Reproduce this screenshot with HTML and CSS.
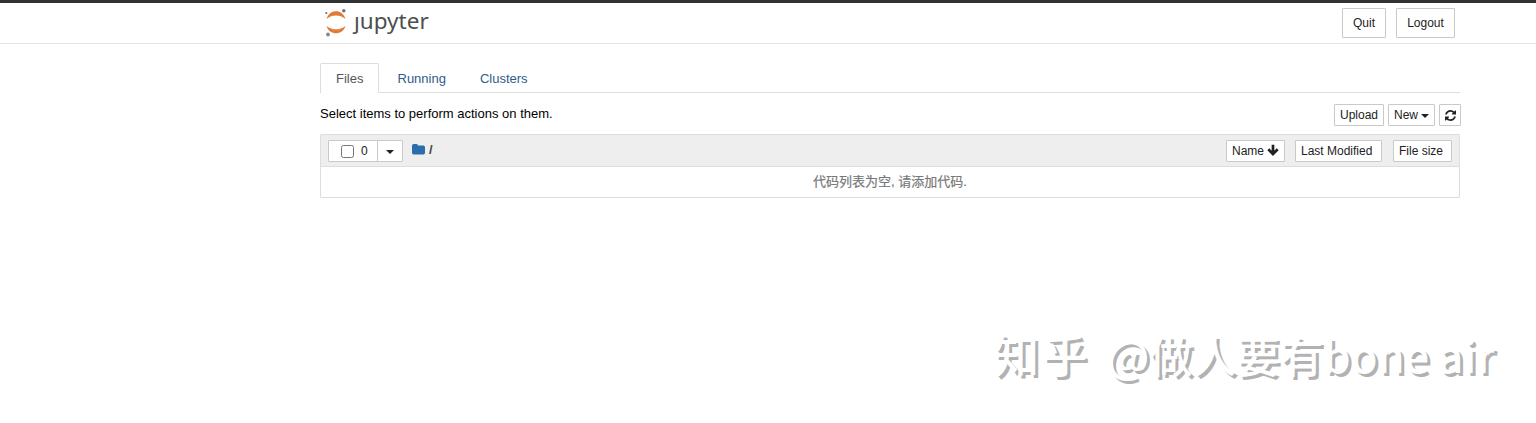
FILE: index.html
```html
<!DOCTYPE html>
<html lang="en">
<head>
<meta charset="utf-8">
<title>Home</title>
<link rel="stylesheet" href="styles.css">
</head>
<body>
<header class="header">
  <div class="container header-row">
    <div class="logo">
      <svg class="logo-mark" width="24" height="30" viewBox="0 0 24 30">
        <path fill="#e37b38" d="M2.5 12.1C4 6.7 7.8 4.2 12 4.2s8 2.500 9.500 7.900C18.500 9.300 15.500 8.400 12 8.400S5.500 9.300 2.500 12.100Z"/>
        <path fill="#e37b38" d="M2.500 18.900C4 23.700 7.800 26.200 12 26.200s8-2.500 9.500-7.300C18.500 21.400 15.500 22.200 12 22.200S5.500 21.400 2.500 18.900Z"/>
        <circle cx="19.800" cy="3.800" r="1.700" fill="#6f7070"/>
        <circle cx="2.300" cy="6" r="1.100" fill="#6f7070"/>
        <circle cx="4" cy="27.500" r="2" fill="#8b8b8b"/>
      </svg>
      <span class="wordmark"><span class="wordmark-j">j</span>upyter</span>
    </div>
    <div class="header-actions">
      <button class="btn btn-quit">Quit</button>
      <button class="btn btn-logout">Logout</button>
    </div>
  </div>
</header>
<main class="container">
  <nav class="tabs">
    <a class="tab active">Files</a>
    <a class="tab running">Running</a>
    <a class="tab">Clusters</a>
  </nav>
  <div class="toolbar">
    <span class="hint">Select items to perform actions on them.</span>
    <div class="tools">
      <button class="btn-xs upload">Upload</button>
      <button class="btn-xs new">New<i class="caret"></i></button>
      <button class="btn-xs refresh"><svg width="11" height="11" viewBox="0 0 1536 1536"><path fill="#222" d="M1511 928q0 5-1 7-64 268-268 434.500T764 1536q-146 0-282.500-55T238 1324l-129 129q-19 19-45 19t-45-19-19-45V960q0-26 19-45t45-19h448q26 0 45 19t19 45-19 45l-137 137q71 66 161 102t187 36q134 0 250-65t186-179q11-17 53-117 8-23 30-23h192q13 0 22.500 9.500t9.500 22.500zm25-800v448q0 26-19 45t-45 19h-448q-26 0-45-19t-19-45 19-45l138-138Q969 256 768 256q-134 0-250 65T332 500q-11 17-53 117-8 23-30 23H50q-13 0-22.500-9.500T18 608v-7q65-268 270-434.500T768 0q146 0 284 55.500T1297 212l130-129q19-19 45-19t45 19 19 45z"/></svg></button>
    </div>
  </div>
  <section class="list">
    <div class="list-header">
      <div class="select-group">
        <label class="select-all"><i class="checkbox"></i>0</label>
        <button class="select-menu"><i class="caret"></i></button>
      </div>
      <div class="breadcrumb">
        <svg width="13" height="11" viewBox="0 0 13 11"><path fill="#296eaa" d="M1.800 0h2.700q1.500 0 1.500 1.500h5.300q1.700 0 1.700 1.700v5.600q0 1.700-1.700 1.700H1.700Q0 10.500 0 8.800V1.800Q0 0 1.800 0Z"/></svg>
        <span>/</span>
      </div>
      <div class="sorts">
        <button class="btn-xs sort-name">Name<svg width="12" height="12" viewBox="0 0 12 12"><path d="M6 .8v9M1.300 5.300 6 10l4.700-4.700" fill="none" stroke="#222" stroke-width="2.700"/></svg></button>
        <button class="btn-xs sort-modified">Last Modified</button>
        <button class="btn-xs sort-size">File size</button>
      </div>
    </div>
    <div class="empty">代码列表为空, 请添加代码.</div>
  </section>
</main>
<div class="watermark"><span class="watermark-site">知乎</span><span>@做人要有bone</span><span>air</span></div>
</body>
</html>
```
FILE: styles.css
```css
* { box-sizing: border-box; }
body {
  margin: 0;
  height: 423px;
  overflow: hidden;
  background: #fff;
  color: #000;
  font: 13px/20px "Liberation Sans", "Noto Sans CJK SC", sans-serif;
}
button {
  margin: 0;
  font: inherit;
  color: #222;
  background: #fff;
  border: 1px solid #c9c9c9;
  border-radius: 1px;
  white-space: nowrap;
}
.container { width: 1141px; margin-left: 320px; }
.header { height: 44px; border-top: 3px solid #323136; border-bottom: 1px solid #e4e4e4; }
.header-row { display: flex; justify-content: space-between; }
.logo { display: flex; padding: 4px 0 0 4px; }
.logo-mark { display: block; }
.wordmark {
  margin: -1px 0 0 6px;
  font: 22.5px/30px "Noto Sans", sans-serif;
  color: #4e4e4e;
}
.wordmark-j { display: inline-block; clip-path: inset(11px -5px -5px -5px); }
.header-actions { display: flex; gap: 10px; padding: 5px 6px 0 0; }
.btn { height: 30px; padding: 0; font-size: 12px; }
.btn-quit { width: 44px; }
.btn-logout { width: 59px; }
.tabs {
  display: flex;
  height: 30px;
  margin-top: 19px;
  width: 1140px;
  border-bottom: 1px solid #ddd;
}
.tab { height: 29px; padding: 6px 15px 0 16px; color: #2f5c8a; }
.tab.active {
  height: 30px;
  width: 59px;
  padding: 5px 0 0 15px;
  color: #555;
  background: #fff;
  border: 1px solid #ddd;
  border-bottom: 0;
  border-radius: 2px 2px 0 0;
}
.tab.running { padding: 6px 18px 0 18.5px; }
.toolbar { display: flex; justify-content: space-between; height: 41px; padding-top: 11px; }
.tools { display: flex; gap: 4px; }
.btn-xs { height: 22px; padding: 0 5px; font-size: 12px; line-height: 20px; text-align: left; }
.upload { width: 50px; }
.new { width: 47px; }
.refresh { display: flex; width: 22px; align-items: center; justify-content: center; padding: 0; }
.caret {
  display: inline-block;
  border: 4px solid transparent;
  border-top-color: #222;
  border-bottom: 0;
  vertical-align: middle;
}
.new .caret { margin-left: 3px; }
.list { width: 1140px; height: 64px; border: 1px solid #ddd; border-radius: 1px; }
.list-header {
  display: flex;
  height: 32px;
  padding: 5px 7px 0;
  background: #eee;
  border-bottom: 1px solid #ddd;
}
.select-group {
  display: flex;
  width: 75px;
  height: 22px;
  background: #fff;
  border: 1px solid #c9c9c9;
  border-radius: 1px;
}
.select-all { display: flex; width: 48px; align-items: center; gap: 7px; padding-left: 12px; font-size: 12px; color: #222; }
.checkbox { width: 13px; height: 13px; border: 1px solid #767676; border-radius: 2.5px; background: #fff; }
.select-menu {
  display: flex;
  width: 25px;
  align-items: center;
  justify-content: center;
  padding: 2px 0 0;
  border: 0;
  border-left: 1px solid #c9c9c9;
  border-radius: 0;
}
.breadcrumb { display: flex; gap: 4px; padding-left: 9px; line-height: 19px; color: #444; font-weight: bold; }
.breadcrumb svg { margin-top: 4px; }
.sorts { display: flex; margin-left: auto; }
.sort-name { width: 59px; margin-right: 10px; }
.sort-name svg { margin-left: 3px; vertical-align: -1px; }
.sort-modified { width: 87px; margin-right: 11px; }
.sort-size { width: 59px; }
.empty { height: 30px; line-height: 30px; text-align: center; color: #777; -webkit-text-stroke: 0.2px #777; }
.watermark {
  position: absolute;
  left: 994px;
  top: 322px;
  display: flex;
  align-items: baseline;
  font: 500 43.5px/64px "Noto Sans CJK SC", sans-serif;
  white-space: nowrap;
  color: #fff;
  text-shadow: 3px 3px 0 #b2b2b2;
}
.watermark span:last-child { margin-left: 9px; letter-spacing: 0.5px; }
.watermark-site { font-size: 45px; letter-spacing: 3px; margin-right: 17px; }
```
